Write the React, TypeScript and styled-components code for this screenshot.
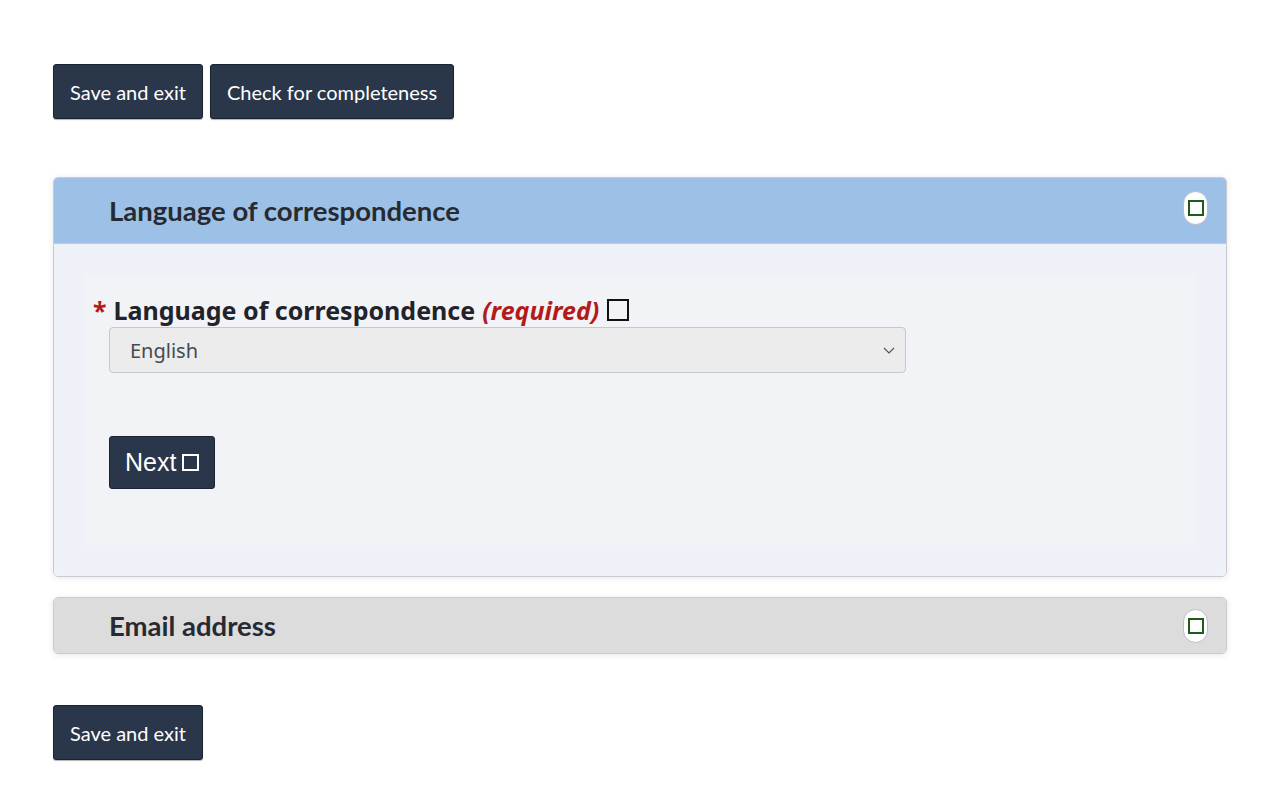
import React from 'react';
import styled, { createGlobalStyle } from 'styled-components';

const GlobalStyle = createGlobalStyle`
  body {
    margin: 0;
    background: #ffffff;
    font-family: Lato, "Liberation Sans", sans-serif;
  }
`;

const Page = styled.div`
  padding: 64px 53px 40px 53px;
`;

const ButtonRow = styled.div`
  display: flex;
  gap: 7px;
`;

const DarkButton = styled.button`
  background: #2a3649;
  color: #ffffff;
  border: 1px solid #1c2433;
  border-radius: 3px;
  height: 55px;
  padding: 0 16px;
  font-family: Lato, sans-serif;
  font-size: 20px;
  box-shadow: 0 1px 1px rgba(0, 0, 0, 0.3);
`;

const Panel = styled.section<{ $open?: boolean }>`
  margin-top: ${(p) => (p.$open ? '58px' : '20px')};
  border: 1px solid #c9ccd2;
  border-radius: 5px;
  overflow: hidden;
  box-shadow: 0 1px 6px rgba(0, 0, 0, 0.1);
`;

const PanelHeader = styled.div<{ $open?: boolean }>`
  display: flex;
  align-items: ${(p) => (p.$open ? 'flex-start' : 'center')};
  justify-content: space-between;
  height: ${(p) => (p.$open ? '65px' : '55px')};
  background: ${(p) => (p.$open ? '#9dc1e6' : '#dcdcdc')};
  padding: 0 18px 0 55px;
  border-bottom: ${(p) => (p.$open ? '1px solid #b8cde3' : 'none')};
`;

const PanelTitle = styled.h2<{ $open?: boolean }>`
  margin: ${(p) => (p.$open ? '16px 0 0 0' : '0')};
  font-family: Lato, sans-serif;
  font-weight: 700;
  font-size: 27.5px;
  color: #262a31;
`;

const Toggle = styled.span<{ $open?: boolean }>`
  display: flex;
  align-items: center;
  justify-content: center;
  width: 25px;
  height: 34px;
  margin-top: ${(p) => (p.$open ? '13px' : '0')};
  border-radius: 13px;
  background: #ffffff;
  border: 1px solid #b9bfc6;
  box-sizing: border-box;
`;

const ToggleBox = styled.span`
  width: 16px;
  height: 16px;
  border: 2px solid #1f5a1f;
  box-sizing: border-box;
`;

const PanelBody = styled.div`
  background: #eef2f8;
  padding: 31px 31px 31px 31px;
`;

const Card = styled.div`
  background: #f2f3f6;
  padding: 19px 0 56px 8px;
  border-radius: 4px;
`;

const Label = styled.label`
  display: flex;
  align-items: center;
  font-family: "Noto Sans", sans-serif;
  font-weight: 700;
  font-size: 25px;
  color: #22232a;
  line-height: 32px;
`;

const Star = styled.span`
  color: #b31b1b;
  margin-right: 7px;
`;

const Required = styled.em`
  color: #b31b1b;
  margin-left: 7px;
`;

const Tofu = styled.span<{ $size: number; $color: string }>`
  display: inline-block;
  width: ${(p) => p.$size}px;
  height: ${(p) => p.$size}px;
  border: 2px solid ${(p) => p.$color};
  box-sizing: border-box;
  margin-left: 8px;
`;

const SelectBox = styled.div`
  display: flex;
  align-items: center;
  justify-content: space-between;
  margin: 1px 0 0 16px;
  width: 797px;
  height: 46px;
  box-sizing: border-box;
  padding: 0 10px 0 20px;
  border: 1px solid #c6c8cc;
  border-radius: 4px;
  background: #ececec;
  font-family: "Noto Sans", sans-serif;
  font-size: 20px;
  color: #444a50;
`;

const NextButton = styled.button`
  display: flex;
  align-items: center;
  margin: 63px 0 0 16px;
  height: 53px;
  padding: 0 15px;
  background: #2a3649;
  color: #ffffff;
  border: 1px solid #1c2433;
  border-radius: 3px;
  font-family: "Liberation Sans", Arial, sans-serif;
  font-size: 25px;
`;

const BottomRow = styled(ButtonRow)`
  margin-top: 51px;
`;

function Chevron() {
  return (
    <svg width="12" height="7" viewBox="0 0 12 7">
      <path d="M1 1l5 5 5-5" fill="none" stroke="#555" strokeWidth="1.2" />
    </svg>
  );
}

export default function App() {
  return (
    <>
      <GlobalStyle />
      <Page>
        <ButtonRow>
          <DarkButton>Save and exit</DarkButton>
          <DarkButton>Check for completeness</DarkButton>
        </ButtonRow>

        <Panel $open>
          <PanelHeader $open>
            <PanelTitle $open>Language of correspondence</PanelTitle>
            <Toggle $open>
              <ToggleBox />
            </Toggle>
          </PanelHeader>
          <PanelBody>
            <Card>
              <Label>
                <Star>*</Star>
                Language of correspondence
                <Required>(required)</Required>
                <Tofu $size={22} $color="#111" />
              </Label>
              <SelectBox>
                <span>English</span>
                <Chevron />
              </SelectBox>
              <NextButton>
                Next
                <Tofu $size={17} $color="#fff" style={{ marginLeft: 6 }} />
              </NextButton>
            </Card>
          </PanelBody>
        </Panel>

        <Panel>
          <PanelHeader>
            <PanelTitle>Email address</PanelTitle>
            <Toggle>
              <ToggleBox />
            </Toggle>
          </PanelHeader>
        </Panel>

        <BottomRow>
          <DarkButton>Save and exit</DarkButton>
        </BottomRow>
      </Page>
    </>
  );
}
